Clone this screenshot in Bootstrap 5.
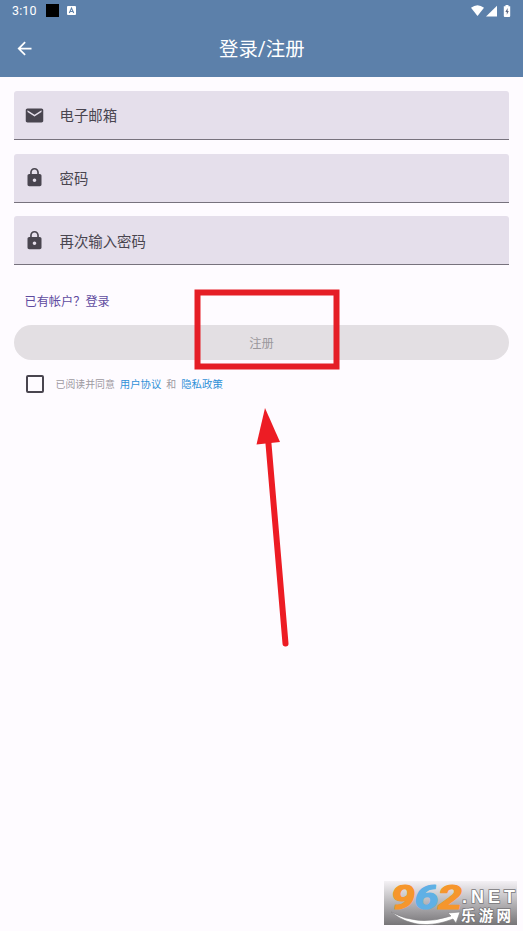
<!DOCTYPE html>
<html lang="zh-CN">
<head>
  <meta charset="UTF-8">
  <meta name="viewport" content="width=device-width, initial-scale=1">
  <title>登录/注册</title>
  <link href="https://cdn.jsdelivr.net/npm/bootstrap@5.3.2/dist/css/bootstrap.min.css" rel="stylesheet">
  <style>
    body { background: #fefbff; font-family: Roboto, "Noto Sans CJK SC", sans-serif; height: 931px; overflow: hidden; }
    svg { display: block; flex: none; }
    .app-top { background: #5c80aa; height: 77px; color: #fff; }
    .status-row { height: 21px; padding: 0 12px; font-size: 12.5px; letter-spacing: .1px; }
    .status-row span { padding-top: 1px; }
    .black-box { width: 13px; height: 13px; background: #000; margin-left: 9px; }
    .title-row { height: 55px; padding: 0 14px; }
    .title-row h1 { font-size: 19.4px; line-height: 28px; font-weight: 400; width: 85px; padding-top: 3px; white-space: nowrap; }
    .title-side { width: 20px; }
    .auth-form { padding: 15px 14px 0; margin-top: -1px; }
    .field-list { gap: 13.7px; }
    .field-box { height: 49px; background: #e5dfeb; border-bottom: 1.5px solid #77727d; border-radius: 3px 3px 0 0; padding-left: 10px; color: #49454f; }
    .field-box input { background: none; border: 0; outline: 0; padding: 4px 0 0; margin-left: 14.5px; font-size: 14.4px; color: #49454f; }
    .field-box input::placeholder { color: #49454f; opacity: 1; }
    .to-login { color: #5f4ba0; font-size: 12.2px; line-height: 18px; padding-left: 10.5px; margin-top: 28px; }
    .btn-register { height: 35px; margin-top: 14px; padding: 2px 0 0; font-size: 12.3px; line-height: 1; --bs-btn-disabled-bg: #e3dfe3; --bs-btn-disabled-color: #9b989d; --bs-btn-disabled-opacity: 1; --bs-btn-disabled-border-color: transparent; }
    .agree-row { margin-top: 13px; padding-left: 12px; font-size: 9.9px; line-height: 20px; color: #9d999f; }
    .agree-row label, .agree-row a, .agree-row span { padding-top: 2px; }
    .agree-row .form-check-input { width: 18px; height: 18px; margin: 0 11.5px 0 0; border: 2px solid #49454f; border-radius: 2px; background: none; }
    .agree-row a { color: #3091d8; font-size: 10.4px; margin: 0 5px; }
    .mark-layer { left: 0; top: 0; pointer-events: none; }
    .site-logo { left: 384px; top: 881px; overflow: visible; }
  </style>
</head>
<body class="position-relative">

  <header class="app-top">
    <div class="status-row d-flex align-items-center">
      <span>3:10</span>
      <div class="black-box"></div>
      <svg class="ms-2" width="9" height="9" viewBox="0 0 9 9"><rect width="9" height="9" rx="1" fill="#fff"/><path d="M2.3 7 4.5 2 6.7 7M3.2 5.5h2.6" fill="none" stroke="#5c80aa" stroke-width="1.1"/></svg>
      <svg class="ms-auto" width="40" height="12" viewBox="0 0 40 12" fill="#fff">
        <path d="M0 2.8Q6.5-2.4 13 2.8L6.5 11Z"/>
        <path d="M15 11.5 26 .7v10.8Z"/>
        <path d="M34.5 0h3v1.2h1.7V11a1 1 0 0 1-1 1h-4.4a1 1 0 0 1-1-1V1.2h1.7Z"/>
        <path d="M36.6 3 34.4 7h1.4v2.7L37.8 6h-1.2Z" fill="#5c6680"/>
      </svg>
    </div>
    <div class="title-row d-flex align-items-center justify-content-between">
      <div class="title-side">
        <svg width="21" height="21" viewBox="0 0 24 24" fill="#fff"><path d="M20 11H7.83l5.59-5.59L12 4l-8 8 8 8 1.41-1.41L7.83 13H20v-2z"/></svg>
      </div>
      <h1 class="m-0">登录/注册</h1>
      <div class="title-side"></div>
    </div>
  </header>

  <main class="auth-form">
    <div class="field-list d-flex flex-column">
      <label class="field-box d-flex align-items-center">
        <svg width="21" height="21" viewBox="0 0 24 24" fill="currentColor"><path d="M20 4H4c-1.1 0-2 .9-2 2v12c0 1.1.9 2 2 2h16c1.1 0 2-.9 2-2V6c0-1.1-.9-2-2-2zm0 4-8 5-8-5V6l8 5 8-5v2z"/></svg>
        <input type="email" placeholder="电子邮箱">
      </label>
      <label class="field-box d-flex align-items-center">
        <svg width="21" height="21" viewBox="0 0 24 24" fill="currentColor"><path d="M18 8h-1V6c0-2.76-2.24-5-5-5S7 3.24 7 6v2H6c-1.1 0-2 .9-2 2v10c0 1.1.9 2 2 2h12c1.1 0 2-.9 2-2V10c0-1.1-.9-2-2-2zm-6 9c-1.1 0-2-.9-2-2s.9-2 2-2 2 .9 2 2-.9 2-2 2zm3.1-9H8.9V6c0-1.71 1.39-3.1 3.1-3.1s3.1 1.39 3.1 3.1v2z"/></svg>
        <input type="password" placeholder="密码">
      </label>
      <label class="field-box d-flex align-items-center">
        <svg width="21" height="21" viewBox="0 0 24 24" fill="currentColor"><path d="M18 8h-1V6c0-2.76-2.24-5-5-5S7 3.24 7 6v2H6c-1.1 0-2 .9-2 2v10c0 1.1.9 2 2 2h12c1.1 0 2-.9 2-2V10c0-1.1-.9-2-2-2zm-6 9c-1.1 0-2-.9-2-2s.9-2 2-2 2 .9 2 2-.9 2-2 2zm3.1-9H8.9V6c0-1.71 1.39-3.1 3.1-3.1s3.1 1.39 3.1 3.1v2z"/></svg>
        <input type="password" placeholder="再次输入密码">
      </label>
    </div>

    <div class="to-login">已有帐户？登录</div>
    <button class="btn btn-register rounded-pill w-100 d-block" type="button" disabled>注册</button>

    <div class="agree-row d-flex align-items-center">
      <input class="form-check-input" type="checkbox" id="agree">
      <label for="agree">已阅读并同意</label>
      <a class="text-decoration-none" href="#">用户协议</a>
      <span>和</span>
      <a class="text-decoration-none" href="#">隐私政策</a>
    </div>
  </main>

  <!-- highlight box and arrow -->
  <svg class="mark-layer position-absolute" width="523" height="931" viewBox="0 0 523 931">
    <rect x="197.5" y="292.5" width="139" height="74" fill="none" stroke="#e51e26" stroke-width="6"/>
    <path d="M268 438 285.5 643.5" stroke="#ed1c24" stroke-width="6" stroke-linecap="round"/>
    <path d="M265 408 280 442 256.5 444.5Z" fill="#ed1c24"/>
  </svg>

  <!-- site logo -->
  <svg class="site-logo position-absolute" width="133" height="44" viewBox="0 0 133 44">
    <defs>
      <linearGradient id="logoBg" x1="0" y1="0" x2="0" y2="1">
        <stop offset="0" stop-color="#f4f1f5"/>
        <stop offset=".35" stop-color="#c9c7ca"/>
        <stop offset="1" stop-color="#777578"/>
      </linearGradient>
    </defs>
    <rect width="133" height="44" fill="url(#logoBg)"/>
    <path d="M7 31Q34 46 67 35L64 32 76 31 72 42 69 38Q33 52 7 31Z" fill="#fff" stroke="#858386" stroke-width=".6"/>
    <g font-family="Roboto, sans-serif" font-weight="700" font-style="italic" font-size="33" stroke-width="1.2" stroke-linejoin="round">
      <text x="7" y="27.5" textLength="24" lengthAdjust="spacingAndGlyphs" fill="#f6962c" stroke="#f6962c">9</text>
      <text x="30.5" y="27.5" textLength="24" lengthAdjust="spacingAndGlyphs" fill="#5fb0e5" stroke="#5fb0e5">6</text>
      <text x="54" y="27.5" textLength="24" lengthAdjust="spacingAndGlyphs" fill="#f6962c" stroke="#f6962c">2</text>
    </g>
    <g fill="#fff" stroke="#777578" stroke-width="1.5" paint-order="stroke" font-weight="700">
      <text x="78" y="21.5" font-family="'Liberation Sans', sans-serif" font-size="18" textLength="53">.NET</text>
      <text x="77" y="39.5" font-family="'Noto Sans CJK SC', sans-serif" font-size="14.5" textLength="50">乐游网</text>
    </g>
  </svg>

  <script src="https://cdn.jsdelivr.net/npm/bootstrap@5.3.2/dist/js/bootstrap.bundle.min.js"></script>
</body>
</html>
